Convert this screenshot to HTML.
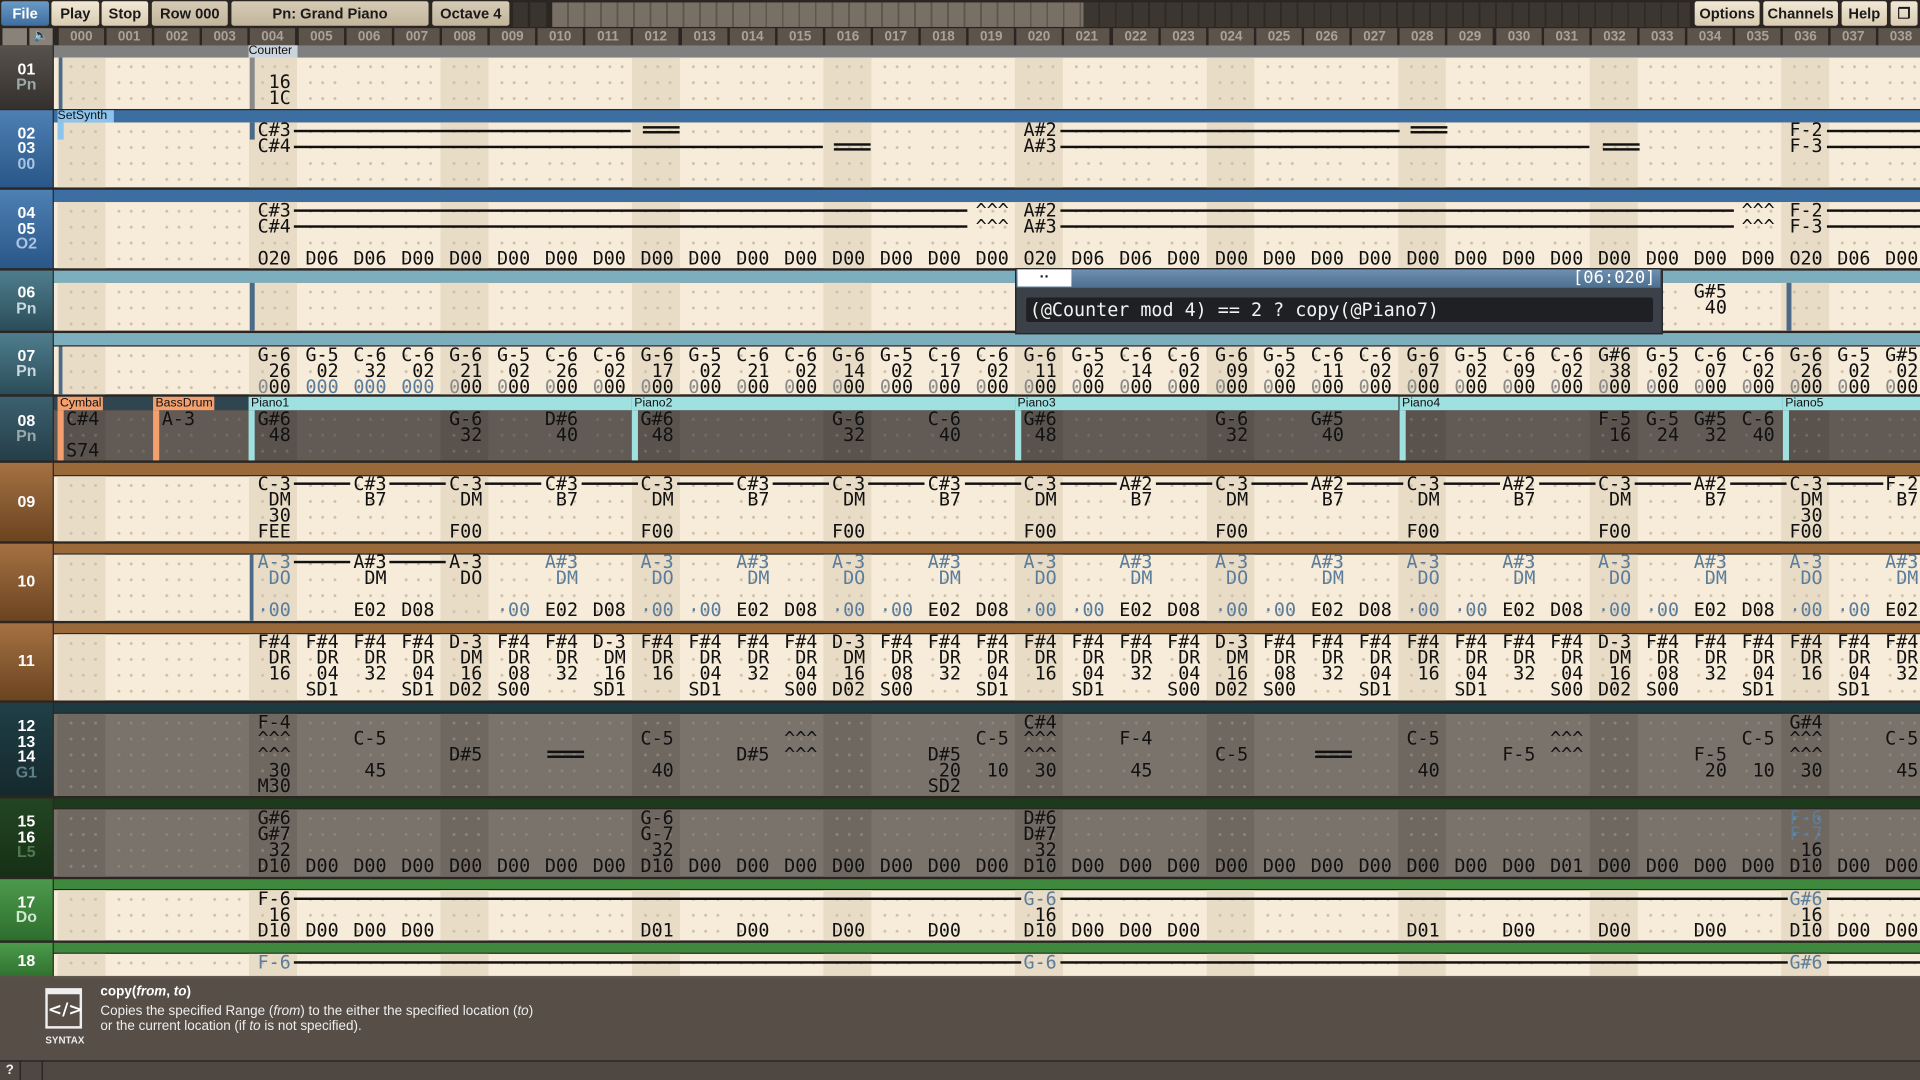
<!DOCTYPE html>
<html><head><meta charset="utf-8"><style>
html,body{margin:0;padding:0;background:#2b2622;overflow:hidden;width:1920px;height:1080px}
.s{position:relative;width:1568px;height:882px;transform:scale(1.22449);transform-origin:0 0;overflow:hidden;background:#2b2622;font-family:"Liberation Sans",sans-serif}
.a{position:absolute}
.btn{position:absolute;top:1px;height:20px;border-radius:2px;background:linear-gradient(#f1e8d6,#d9ccb2);color:#1a1a1a;font-size:12px;line-height:20px;text-align:center;font-weight:bold;font-stretch:condensed}
.btn.d{background:linear-gradient(#d6cbb5,#c2b59c)}
.hc{position:absolute;top:23px;height:14px;width:37px;background:#5c534b;color:#aaa198;font-size:11px;line-height:14px;text-align:center;font-weight:bold}
.lab{position:absolute;left:0;width:43px;color:#fff;font-weight:bold;font-size:13px;line-height:12.5px;text-align:center;display:flex;flex-direction:column;justify-content:center}
.lab i{font-style:normal;color:#9aa}
.band{position:absolute;left:44px;right:0}
.ct{position:absolute;left:44px;right:0;background-color:#f6ecd9;
--d:#cdbfa8;--s:#e9dcc6;
background-image:radial-gradient(circle,var(--d) 1px,transparent 1.4px),radial-gradient(circle,var(--d) 1px,transparent 1.4px),radial-gradient(circle,var(--d) 1px,transparent 1.4px),repeating-linear-gradient(90deg,var(--s) 0,var(--s) 39.1px,transparent 39.1px,transparent 156.4px);
background-size:39.1px 13px,39.1px 13px,39.1px 13px,auto;
background-position:-5.5px 1px,4.5px 1px,14.5px 1px,3px 0;
background-repeat:repeat,repeat,repeat,repeat}
.dk{background-color:#7a736b;--s:#6f6860;--d:#8c857c}
.g{position:absolute;left:47px;display:grid;grid-template-columns:repeat(40,39.1px);font:15px/13px "DejaVu Sans Mono",monospace;white-space:pre;color:#111}
.g b{font-weight:normal;padding-left:7px;grid-row:1}
.bl{color:#5b7d9c}.gr{color:#8a8a8a}
.c0{grid-column:1}.c1{grid-column:2}.c2{grid-column:3}.c3{grid-column:4}.c4{grid-column:5}.c5{grid-column:6}.c6{grid-column:7}.c7{grid-column:8}.c8{grid-column:9}.c9{grid-column:10}.c10{grid-column:11}.c11{grid-column:12}.c12{grid-column:13}.c13{grid-column:14}.c14{grid-column:15}.c15{grid-column:16}.c16{grid-column:17}.c17{grid-column:18}.c18{grid-column:19}.c19{grid-column:20}.c20{grid-column:21}.c21{grid-column:22}.c22{grid-column:23}.c23{grid-column:24}.c24{grid-column:25}.c25{grid-column:26}.c26{grid-column:27}.c27{grid-column:28}.c28{grid-column:29}.c29{grid-column:30}.c30{grid-column:31}.c31{grid-column:32}.c32{grid-column:33}.c33{grid-column:34}.c34{grid-column:35}.c35{grid-column:36}.c36{grid-column:37}.c37{grid-column:38}.c38{grid-column:39}.c39{grid-column:40}
.hl{position:absolute;height:2px;background:#111}
.eq{position:absolute;width:30px;height:2px;border-top:2px solid #111;border-bottom:2px solid #111}
.clip{position:absolute;top:324px;height:11px;font-size:10px;line-height:11px;color:#111;padding-left:2px}
.vb{position:absolute;width:5px}
</style></head><body><div class="s">

<div class="btn" style="left:1px;width:39px;background:linear-gradient(#6a9ac6,#3d6e9e);color:#fff">File</div>
<div class="btn" style="left:42px;width:39px">Play</div>
<div class="btn" style="left:83px;width:38px">Stop</div>
<div class="btn d" style="left:124px;width:62px">Row 000</div>
<div class="btn d" style="left:189px;width:161px">Pn: Grand Piano</div>
<div class="btn d" style="left:353px;width:63px">Octave 4</div>
<div class="a" style="left:419px;top:2px;width:12px;height:20px;background:#3a342f"></div>
<div class="a" style="left:433px;top:2px;width:13px;height:20px;background:#3a342f"></div>
<div class="a" style="left:451px;top:2px;width:434px;height:20px;background:repeating-linear-gradient(90deg,#786f65 0,#786f65 12px,#5f574f 12px,#5f574f 13.5px)"></div>
<div class="a" style="left:885px;top:2px;width:495px;height:20px;background:repeating-linear-gradient(90deg,#3c3631 0,#3c3631 12px,#2f2a26 12px,#2f2a26 13.5px)"></div>
<div class="btn" style="left:1384px;width:53px">Options</div>
<div class="btn" style="left:1440px;width:61px">Channels</div>
<div class="btn" style="left:1504px;width:37px">Help</div>
<div class="btn" style="left:1544px;width:22px">&#10064;</div>

<div class="a" style="left:2px;top:23px;width:20px;height:14px;background:#8a8178"></div>
<div class="a" style="left:24px;top:23px;width:19px;height:14px;background:#8a8178;color:#222;font-size:10px;line-height:14px;text-align:center">&#128264;</div>
<div class="hc" style="left:48px">000</div><div class="hc" style="left:87px">001</div><div class="hc" style="left:126px">002</div><div class="hc" style="left:165px">003</div><div class="hc" style="left:204px">004</div><div class="hc" style="left:244px">005</div><div class="hc" style="left:283px">006</div><div class="hc" style="left:322px">007</div><div class="hc" style="left:361px">008</div><div class="hc" style="left:400px">009</div><div class="hc" style="left:439px">010</div><div class="hc" style="left:478px">011</div><div class="hc" style="left:517px">012</div><div class="hc" style="left:557px">013</div><div class="hc" style="left:596px">014</div><div class="hc" style="left:635px">015</div><div class="hc" style="left:674px">016</div><div class="hc" style="left:713px">017</div><div class="hc" style="left:752px">018</div><div class="hc" style="left:791px">019</div><div class="hc" style="left:830px">020</div><div class="hc" style="left:869px">021</div><div class="hc" style="left:909px">022</div><div class="hc" style="left:948px">023</div><div class="hc" style="left:987px">024</div><div class="hc" style="left:1026px">025</div><div class="hc" style="left:1065px">026</div><div class="hc" style="left:1104px">027</div><div class="hc" style="left:1143px">028</div><div class="hc" style="left:1182px">029</div><div class="hc" style="left:1222px">030</div><div class="hc" style="left:1261px">031</div><div class="hc" style="left:1300px">032</div><div class="hc" style="left:1339px">033</div><div class="hc" style="left:1378px">034</div><div class="hc" style="left:1417px">035</div><div class="hc" style="left:1456px">036</div><div class="hc" style="left:1495px">037</div><div class="hc" style="left:1534px">038</div>

<div class="lab" style="top:37px;height:52px;background:linear-gradient(#58524d,#34302d)">01<i>Pn</i></div>
<div class="lab" style="top:90px;height:63px;background:linear-gradient(#4e80b4,#2a5688)">02<br>03<i style="color:#a8c4e0">00</i></div>
<div class="lab" style="top:155px;height:64px;background:linear-gradient(#4e80b4,#2a5688)">04<br>05<i style="color:#a8c4e0">O2</i></div>
<div class="lab" style="top:221px;height:49px;background:linear-gradient(#4f7d8d,#2b4d5a)">06<i style="color:#c8d8dc">Pn</i></div>
<div class="lab" style="top:272px;height:50px;background:linear-gradient(#4f7d8d,#2b4d5a)">07<i style="color:#c8d8dc">Pn</i></div>
<div class="lab" style="top:324px;height:52px;background:linear-gradient(#3c6070,#253e48)">08<i>Pn</i></div>
<div class="lab" style="top:378px;height:64px;background:linear-gradient(#a57142,#6b4420)">09</div>
<div class="lab" style="top:444px;height:63px;background:linear-gradient(#a57142,#6b4420)">10</div>
<div class="lab" style="top:509px;height:63px;background:linear-gradient(#a57142,#6b4420)">11</div>
<div class="lab" style="top:574px;height:76px;background:linear-gradient(#1f3f46,#15292d)">12<br>13<br>14<i style="color:#5e8088">G1</i></div>
<div class="lab" style="top:652px;height:64px;background:linear-gradient(#234523,#163016)">15<br>16<i style="color:#4f7a4f">L5</i></div>
<div class="lab" style="top:718px;height:50px;background:linear-gradient(#4c9a4c,#2d6e2d)">17<i style="color:#cfe6cf">Do</i></div>
<div class="lab" style="top:770px;height:30px;background:linear-gradient(#4c9a4c,#2d6e2d)">18</div>

<div class="band" style="top:37px;height:10px;background:#808080"></div>
<div class="ct" style="top:47px;height:42px"></div>
<div class="band" style="top:90px;height:10px;background:#3d6ea1"></div>
<div class="ct" style="top:100px;height:53px"></div>
<div class="band" style="top:155px;height:10px;background:#3d6ea1"></div>
<div class="ct" style="top:165px;height:54px"></div>
<div class="band" style="top:221px;height:10px;background:#7caebe"></div>
<div class="ct" style="top:231px;height:39px"></div>
<div class="band" style="top:272px;height:10px;background:#7caebe"></div>
<div class="ct" style="top:283px;height:39px"></div>
<div class="band" style="top:324px;height:11px;background:#2f4650"></div>
<div class="ct dk" style="top:335px;height:41px;background-color:#625b55;--s:#5a534d;--d:#736c65"></div>
<div class="band" style="top:378px;height:10px;background:#9a6939"></div>
<div class="ct" style="top:389px;height:53px"></div>
<div class="band" style="top:444px;height:8px;background:#9a6939"></div>
<div class="ct" style="top:453px;height:54px"></div>
<div class="band" style="top:509px;height:8px;background:#9a6939"></div>
<div class="ct" style="top:518px;height:54px"></div>
<div class="band" style="top:574px;height:8px;background:#1d3a40"></div>
<div class="ct dk" style="top:583px;height:67px"></div>
<div class="band" style="top:652px;height:8px;background:#1d3a1d"></div>
<div class="ct dk" style="top:661px;height:55px"></div>
<div class="band" style="top:718px;height:8px;background:#3f893f"></div>
<div class="ct" style="top:727px;height:41px"></div>
<div class="band" style="top:770px;height:8px;background:#3f893f"></div>
<div class="ct" style="top:779px;height:20px"></div>

<div class="a" style="left:203px;top:37px;width:40px;height:10px;background:#c9d4dc;font-size:10px;line-height:10px;color:#111">Counter</div>
<div class="vb" style="left:204px;top:47px;height:42px;width:4px;background:#8a8a8a"></div>
<div class="vb" style="left:48px;top:47px;height:42px;width:3px;background:#4a6a88"></div>
<div class="g" style="top:48px"><b class="c4">   
 16
 1C</b></div>

<div class="a" style="left:47px;top:90px;width:46px;height:10px;background:#8cc4ee;font-size:10px;line-height:10px;color:#111">SetSynth</div>
<div class="vb" style="left:47px;top:100px;height:14px;width:5px;background:#8cc4ee"></div>
<div class="vb" style="left:204px;top:100px;height:14px;width:4px;background:#4a6a88"></div>
<div class="g" style="top:100px"><b class="c4">C#3
C#4</b><b class="c20">A#2
A#3</b><b class="c36">F-2
F-3</b></div>
<div class="hl" style="left:240px;top:106px;width:275px"></div>
<div class="hl" style="left:240px;top:119px;width:432px"></div>
<div class="eq" style="left:525px;top:103px"></div>
<div class="eq" style="left:681px;top:117px"></div>
<div class="hl" style="left:866px;top:106px;width:277px"></div>
<div class="hl" style="left:866px;top:119px;width:432px"></div>
<div class="eq" style="left:1152px;top:103px"></div>
<div class="eq" style="left:1309px;top:117px"></div>
<div class="hl" style="left:1492px;top:106px;width:76px"></div>
<div class="hl" style="left:1492px;top:119px;width:76px"></div>

<div class="g" style="top:166px"><b class="c4">C#3
C#4

O20</b><b class="c5">


D06</b><b class="c6">


D06</b><b class="c7">


D00</b><b class="c8">


D00</b><b class="c9">


D00</b><b class="c10">


D00</b><b class="c11">


D00</b><b class="c12">


D00</b><b class="c13">


D00</b><b class="c14">


D00</b><b class="c15">


D00</b><b class="c16">


D00</b><b class="c17">


D00</b><b class="c18">


D00</b><b class="c19">^^^
^^^

D00</b><b class="c20">A#2
A#3

O20</b><b class="c21">


D06</b><b class="c22">


D06</b><b class="c23">


D00</b><b class="c24">


D00</b><b class="c25">


D00</b><b class="c26">


D00</b><b class="c27">


D00</b><b class="c28">


D00</b><b class="c29">


D00</b><b class="c30">


D00</b><b class="c31">


D00</b><b class="c32">


D00</b><b class="c33">


D00</b><b class="c34">


D00</b><b class="c35">^^^
^^^

D00</b><b class="c36">F-2
F-3

O20</b><b class="c37">


D06</b><b class="c38">


D00</b></div>
<div class="hl" style="left:240px;top:171px;width:550px"></div>
<div class="hl" style="left:240px;top:184px;width:550px"></div>
<div class="hl" style="left:866px;top:171px;width:550px"></div>
<div class="hl" style="left:866px;top:184px;width:550px"></div>
<div class="hl" style="left:1492px;top:171px;width:76px"></div>
<div class="hl" style="left:1492px;top:184px;width:76px"></div>

<div class="vb" style="left:204px;top:231px;height:39px;width:4px;background:#4a6a88"></div>
<div class="vb" style="left:1459px;top:231px;height:39px;width:4px;background:#4a6a88"></div>
<div class="g" style="top:232px"><b class="c34">G#5
 40</b></div>

<div class="vb" style="left:48px;top:283px;height:39px;width:3px;background:#4a6a88"></div>
<div class="g" style="top:284px"><b class="c4">G-6
 26
<span class="gr">0</span>00</b><b class="c5">G-5
 02
<span class="bl">000</span></b><b class="c6">C-6
 32
<span class="bl">000</span></b><b class="c7">C-6
 02
<span class="bl">000</span></b><b class="c8">G-6
 21
<span class="gr">0</span>00</b><b class="c9">G-5
 02
<span class="gr">0</span>00</b><b class="c10">C-6
 26
<span class="gr">0</span>00</b><b class="c11">C-6
 02
<span class="gr">0</span>00</b><b class="c12">G-6
 17
<span class="gr">0</span>00</b><b class="c13">G-5
 02
<span class="gr">0</span>00</b><b class="c14">C-6
 21
<span class="gr">0</span>00</b><b class="c15">C-6
 02
<span class="gr">0</span>00</b><b class="c16">G-6
 14
<span class="gr">0</span>00</b><b class="c17">G-5
 02
<span class="gr">0</span>00</b><b class="c18">C-6
 17
<span class="gr">0</span>00</b><b class="c19">C-6
 02
<span class="gr">0</span>00</b><b class="c20">G-6
 11
<span class="gr">0</span>00</b><b class="c21">G-5
 02
<span class="gr">0</span>00</b><b class="c22">C-6
 14
<span class="gr">0</span>00</b><b class="c23">C-6
 02
<span class="gr">0</span>00</b><b class="c24">G-6
 09
<span class="gr">0</span>00</b><b class="c25">G-5
 02
<span class="gr">0</span>00</b><b class="c26">C-6
 11
<span class="gr">0</span>00</b><b class="c27">C-6
 02
<span class="gr">0</span>00</b><b class="c28">G-6
 07
<span class="gr">0</span>00</b><b class="c29">G-5
 02
<span class="gr">0</span>00</b><b class="c30">C-6
 09
<span class="gr">0</span>00</b><b class="c31">C-6
 02
<span class="gr">0</span>00</b><b class="c32">G#6
 38
<span class="gr">0</span>00</b><b class="c33">G-5
 02
<span class="gr">0</span>00</b><b class="c34">C-6
 07
<span class="gr">0</span>00</b><b class="c35">C-6
 02
<span class="gr">0</span>00</b><b class="c36">G-6
 26
<span class="gr">0</span>00</b><b class="c37">G-5
 02
<span class="gr">0</span>00</b><b class="c38">G#5
 02
<span class="gr">0</span>00</b></div>

<div class="clip" style="left:47px;width:35px;background:#f4a06e">Cymbal</div>
<div class="vb" style="left:47px;top:335px;height:41px;background:#f4a06e"></div>
<div class="clip" style="left:125px;width:48px;background:#f4a06e">BassDrum</div>
<div class="vb" style="left:125px;top:335px;height:41px;background:#f4a06e"></div>
<div class="clip" style="left:203px;width:311px;background:#9fe0e0">Piano1</div>
<div class="vb" style="left:203px;top:335px;height:41px;background:#9fe0e0"></div>
<div class="clip" style="left:516px;width:311px;background:#9fe0e0">Piano2</div>
<div class="vb" style="left:516px;top:335px;height:41px;background:#9fe0e0"></div>
<div class="clip" style="left:829px;width:311px;background:#9fe0e0">Piano3</div>
<div class="vb" style="left:829px;top:335px;height:41px;background:#9fe0e0"></div>
<div class="clip" style="left:1143px;width:311px;background:#9fe0e0">Piano4</div>
<div class="vb" style="left:1143px;top:335px;height:41px;background:#9fe0e0"></div>
<div class="clip" style="left:1456px;width:112px;background:#9fe0e0">Piano5</div>
<div class="vb" style="left:1456px;top:335px;height:41px;background:#9fe0e0"></div>
<div class="g" style="top:336px"><b class="c0">C#4

S74</b><b class="c2">A-3</b><b class="c4">G#6
 48</b><b class="c8">G-6
 32</b><b class="c10">D#6
 40</b><b class="c12">G#6
 48</b><b class="c16">G-6
 32</b><b class="c18">C-6
 40</b><b class="c20">G#6
 48</b><b class="c24">G-6
 32</b><b class="c26">G#5
 40</b><b class="c32">F-5
 16</b><b class="c33">G-5
 24</b><b class="c34">G#5
 32</b><b class="c35">C-6
 40</b></div>

<div class="g" style="top:389px"><b class="c4">C-3
 DM
 30
FEE</b><b class="c6">C#3
 B7</b><b class="c8">C-3
 DM

F00</b><b class="c10">C#3
 B7</b><b class="c12">C-3
 DM

F00</b><b class="c14">C#3
 B7</b><b class="c16">C-3
 DM

F00</b><b class="c18">C#3
 B7</b><b class="c20">C-3
 DM

F00</b><b class="c22">A#2
 B7</b><b class="c24">C-3
 DM

F00</b><b class="c26">A#2
 B7</b><b class="c28">C-3
 DM

F00</b><b class="c30">A#2
 B7</b><b class="c32">C-3
 DM

F00</b><b class="c34">A#2
 B7</b><b class="c36">C-3
 DM
 30
F00</b><b class="c38">F-2
 B7</b></div>
<div class="hl" style="left:240px;top:394px;width:46px"></div><div class="hl" style="left:318px;top:394px;width:46px"></div><div class="hl" style="left:396px;top:394px;width:46px"></div><div class="hl" style="left:475px;top:394px;width:46px"></div><div class="hl" style="left:553px;top:394px;width:46px"></div><div class="hl" style="left:631px;top:394px;width:46px"></div><div class="hl" style="left:709px;top:394px;width:46px"></div><div class="hl" style="left:788px;top:394px;width:46px"></div><div class="hl" style="left:866px;top:394px;width:46px"></div><div class="hl" style="left:944px;top:394px;width:46px"></div><div class="hl" style="left:1022px;top:394px;width:46px"></div><div class="hl" style="left:1100px;top:394px;width:46px"></div><div class="hl" style="left:1179px;top:394px;width:46px"></div><div class="hl" style="left:1257px;top:394px;width:46px"></div><div class="hl" style="left:1335px;top:394px;width:46px"></div><div class="hl" style="left:1413px;top:394px;width:46px"></div><div class="hl" style="left:1492px;top:394px;width:46px"></div>

<div class="vb" style="left:204px;top:453px;height:54px;width:3px;background:#4a6a88"></div>
<div class="g" style="top:453px"><b class="c4 bl">A-3
 DO

·00</b><b class="c6">A#3
 DM

E02</b><b class="c7">


D08</b><b class="c8">A-3
 DO</b><b class="c9 bl">


·00</b><b class="c10 bl">A#3
 DM

<span style="color:#111">E02</span></b><b class="c11">


D08</b><b class="c12 bl">A-3
 DO

·00</b><b class="c13 bl">


·00</b><b class="c14 bl">A#3
 DM

<span style="color:#111">E02</span></b><b class="c15">


D08</b><b class="c16 bl">A-3
 DO

·00</b><b class="c17 bl">


·00</b><b class="c18 bl">A#3
 DM

<span style="color:#111">E02</span></b><b class="c19">


D08</b><b class="c20 bl">A-3
 DO

·00</b><b class="c21 bl">


·00</b><b class="c22 bl">A#3
 DM

<span style="color:#111">E02</span></b><b class="c23">


D08</b><b class="c24 bl">A-3
 DO

·00</b><b class="c25 bl">


·00</b><b class="c26 bl">A#3
 DM

<span style="color:#111">E02</span></b><b class="c27">


D08</b><b class="c28 bl">A-3
 DO

·00</b><b class="c29 bl">


·00</b><b class="c30 bl">A#3
 DM

<span style="color:#111">E02</span></b><b class="c31">


D08</b><b class="c32 bl">A-3
 DO

·00</b><b class="c33 bl">


·00</b><b class="c34 bl">A#3
 DM

<span style="color:#111">E02</span></b><b class="c35">


D08</b><b class="c36 bl">A-3
 DO

·00</b><b class="c37 bl">


·00</b><b class="c38 bl">A#3
 DM

<span style="color:#111">E02</span></b></div>
<div class="hl" style="left:240px;top:458px;width:46px"></div><div class="hl" style="left:318px;top:458px;width:46px"></div>

<div class="g" style="top:518px"><b class="c4">F#4
 DR
 16</b><b class="c5">F#4
 DR
 04
SD1</b><b class="c6">F#4
 DR
 32</b><b class="c7">F#4
 DR
 04
SD1</b><b class="c8">D-3
 DM
 16
D02</b><b class="c9">F#4
 DR
 08
S00</b><b class="c10">F#4
 DR
 32</b><b class="c11">D-3
 DM
 16
SD1</b><b class="c12">F#4
 DR
 16</b><b class="c13">F#4
 DR
 04
SD1</b><b class="c14">F#4
 DR
 32</b><b class="c15">F#4
 DR
 04
S00</b><b class="c16">D-3
 DM
 16
D02</b><b class="c17">F#4
 DR
 08
S00</b><b class="c18">F#4
 DR
 32</b><b class="c19">F#4
 DR
 04
SD1</b><b class="c20">F#4
 DR
 16</b><b class="c21">F#4
 DR
 04
SD1</b><b class="c22">F#4
 DR
 32</b><b class="c23">F#4
 DR
 04
S00</b><b class="c24">D-3
 DM
 16
D02</b><b class="c25">F#4
 DR
 08
S00</b><b class="c26">F#4
 DR
 32</b><b class="c27">F#4
 DR
 04
SD1</b><b class="c28">F#4
 DR
 16</b><b class="c29">F#4
 DR
 04
SD1</b><b class="c30">F#4
 DR
 32</b><b class="c31">F#4
 DR
 04
S00</b><b class="c32">D-3
 DM
 16
D02</b><b class="c33">F#4
 DR
 08
S00</b><b class="c34">F#4
 DR
 32</b><b class="c35">F#4
 DR
 04
SD1</b><b class="c36">F#4
 DR
 16</b><b class="c37">F#4
 DR
 04
SD1</b><b class="c38">F#4
 DR
 32</b></div>

<div class="g" style="top:584px"><b class="c4">F-4
^^^
^^^
 30
M30</b><b class="c6">
C-5

 45</b><b class="c8">

D#5</b><b class="c12">
C-5

 40</b><b class="c14">

D#5</b><b class="c15">
^^^
^^^</b><b class="c18">

D#5
 20
SD2</b><b class="c19">
C-5

 10</b><b class="c20">C#4
^^^
^^^
 30</b><b class="c22">
F-4

 45</b><b class="c24">

C-5</b><b class="c28">
C-5

 40</b><b class="c30">

F-5</b><b class="c31">
^^^
^^^</b><b class="c34">

F-5
 20</b><b class="c35">
C-5

 10</b><b class="c36">G#4
^^^
^^^
 30</b><b class="c38">
C-5

 45</b></div>
<div class="eq" style="left:447px;top:613px"></div>
<div class="eq" style="left:1074px;top:613px"></div>

<div class="g" style="top:662px"><b class="c4">G#6
G#7
 32
D10</b><b class="c5">


D00</b><b class="c6">


D00</b><b class="c7">


D00</b><b class="c8">


D00</b><b class="c9">


D00</b><b class="c10">


D00</b><b class="c11">


D00</b><b class="c12">G-6
G-7
 32
D10</b><b class="c13">


D00</b><b class="c14">


D00</b><b class="c15">


D00</b><b class="c16">


D00</b><b class="c17">


D00</b><b class="c18">


D00</b><b class="c19">


D00</b><b class="c20">D#6
D#7
 32
D10</b><b class="c21">


D00</b><b class="c22">


D00</b><b class="c23">


D00</b><b class="c24">


D00</b><b class="c25">


D00</b><b class="c26">


D00</b><b class="c27">


D00</b><b class="c28">


D00</b><b class="c29">


D00</b><b class="c30">


D00</b><b class="c31">


D01</b><b class="c32">


D00</b><b class="c33">


D00</b><b class="c34">


D00</b><b class="c35">


D00</b><b class="c36"><span class="bl">F-6
F-7</span>
 16
D10</b><b class="c37">


D00</b><b class="c38">


D00</b></div>

<div class="g" style="top:728px"><b class="c4">F-6
 16
D10</b><b class="c5">

D00</b><b class="c6">

D00</b><b class="c7">

D00</b><b class="c12">

D01</b><b class="c14">

D00</b><b class="c16">

D00</b><b class="c18">

D00</b><b class="c20"><span class="bl">G-6</span>
 16
D10</b><b class="c21">

D00</b><b class="c22">

D00</b><b class="c23">

D00</b><b class="c28">

D01</b><b class="c30">

D00</b><b class="c32">

D00</b><b class="c34">

D00</b><b class="c36"><span class="bl">G#6</span>
 16
D10</b><b class="c37">

D00</b><b class="c38">

D00</b></div>
<div class="hl" style="left:240px;top:733px;width:594px"></div>
<div class="hl" style="left:866px;top:733px;width:594px"></div>
<div class="hl" style="left:1492px;top:733px;width:76px"></div>

<div class="g" style="top:780px"><b class="c4 bl">F-6</b><b class="c20 bl">G-6</b><b class="c36 bl">G#6</b></div>
<div class="hl" style="left:240px;top:785px;width:594px"></div>
<div class="hl" style="left:866px;top:785px;width:594px"></div>
<div class="hl" style="left:1492px;top:785px;width:76px"></div>

<div class="a" style="left:829px;top:219px;width:527px;height:52px;background:#3b4049;border:1px solid #222"></div>
<div class="a" style="left:830px;top:220px;width:526px;height:15px;background:linear-gradient(#6f90b0,#4d6f90)"></div>
<div class="a" style="left:831px;top:220px;width:44px;height:14px;background:#fff;color:#111;font-size:12px;line-height:12px;text-align:center;font-weight:bold">··</div>
<div class="a" style="left:1270px;top:220px;width:82px;height:15px;color:#fff;font:14px/15px 'DejaVu Sans Mono',monospace;text-align:right">[06:020]</div>
<div class="a" style="left:838px;top:243px;width:509px;height:20px;background:#1f2023;border-radius:2px;color:#f2f2f2;font:15px/20px 'DejaVu Sans Mono',monospace;padding-left:3px;white-space:pre">(@Counter mod 4) == 2 ? copy(@Piano7)</div>

<div class="a" style="left:0;top:797px;width:1568px;height:69px;background:rgba(88,80,73,0.96)"></div>
<div class="a" style="left:37px;top:807px;width:30px;height:33px;border:2px solid #eee;border-top-width:5px;box-sizing:border-box;color:#fff;font:bold 14px/26px 'DejaVu Sans',sans-serif;text-align:center">&lt;/&gt;</div>
<div class="a" style="left:36px;top:845px;width:34px;font-size:8px;font-weight:bold;color:#eee;text-align:center">SYNTAX</div>
<div class="a" style="left:82px;top:804px;font-size:11px;font-weight:bold;color:#fff">copy(<i>from</i>, <i>to</i>)</div>
<div class="a" style="left:82px;top:821px;font-size:11px;line-height:11.5px;color:#eee">Copies the specified Range (<i>from</i>) to the either the specified location (<i>to</i>)<br>or the current location (if <i>to</i> is not specified).</div>

<div class="a" style="left:0;top:866px;width:1568px;height:16px;background:#4f4741;border-top:1px solid #222"></div>
<div class="a" style="left:0;top:867px;width:16px;height:15px;color:#eee;font-size:11px;font-weight:bold;line-height:15px;text-align:center;border-right:1px solid #222">?</div>
<div class="a" style="left:17px;top:867px;width:17px;height:15px;border-right:1px solid #222"></div>
</div></body></html>
